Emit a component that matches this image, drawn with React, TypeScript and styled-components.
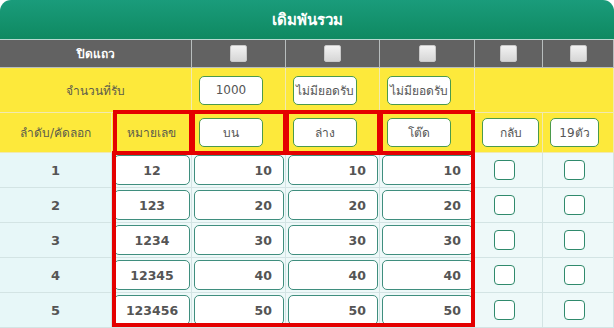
import React from 'react';
import styled, {createGlobalStyle, css} from 'styled-components';

type Tone = 'dark' | 'yellow' | 'data' | 'index';

const GlobalStyle = createGlobalStyle`
  html, body {
    margin: 0;
    padding: 0;
    background: #fff;
  }
  body {
    font-family: Tahoma, "DejaVu Sans", "Noto Sans", sans-serif;
  }
`;

const tones = {
  dark: css`
    background: #626262;
    color: #fff;
    font-weight: bold;
    font-size: 12px;
    border-color: #b8bdbd;
  `,
  yellow: css`
    background: #fde93b;
    color: #5c5c4c;
    font-size: 12px;
    border-color: #f1e9b0;
  `,
  data: css`
    background: #eef9f9;
    border-color: #d3e4e4;
  `,
  index: css`
    background: #e7f7f8;
    color: #555;
    font-weight: bold;
    font-size: 13px;
    border-color: #d3e4e4;
  `,
};

const rows = [
  {no: 1, num: '12', top: 10, bottom: 10, tod: 10},
  {no: 2, num: '123', top: 20, bottom: 20, tod: 20},
  {no: 3, num: '1234', top: 30, bottom: 30, tod: 30},
  {no: 4, num: '12345', top: 40, bottom: 40, tod: 40},
  {no: 5, num: '123456', top: 50, bottom: 50, tod: 50},
];

const App = () => {
  return (
    <>
      <GlobalStyle />
      <Panel>
        <Title>เดิมพันรวม</Title>
        <Grid>
          <Cell $c="1 / 3" $r={1} $tone="dark">ปิดแถว</Cell>
          {[3, 4, 5, 6, 7].map((c) => (
            <Cell key={c} $c={String(c)} $r={1} $tone="dark">
              <Tick />
            </Cell>
          ))}

          <Cell $c="1 / 3" $r={2} $tone="yellow">จำนวนที่รับ</Cell>
          <Cell $c="3" $r={2} $tone="yellow" $start>
            <Chip $w={64}>1000</Chip>
          </Cell>
          <Cell $c="4" $r={2} $tone="yellow" $start>
            <Chip $w={64}>ไม่มียอดรับ</Chip>
          </Cell>
          <Cell $c="5" $r={2} $tone="yellow" $start>
            <Chip $w={64}>ไม่มียอดรับ</Chip>
          </Cell>
          <Cell $c="6 / 8" $r={2} $tone="yellow" />

          <Cell $c="1" $r={3} $tone="yellow">ลำดับ/คัดลอก</Cell>
          <Cell $c="2" $r={3} $tone="yellow">หมายเลข</Cell>
          <Cell $c="3" $r={3} $tone="yellow" $start>
            <Chip $w={64}>บน</Chip>
          </Cell>
          <Cell $c="4" $r={3} $tone="yellow" $start>
            <Chip $w={64}>ล่าง</Chip>
          </Cell>
          <Cell $c="5" $r={3} $tone="yellow" $start>
            <Chip $w={64}>โต๊ด</Chip>
          </Cell>
          <Cell $c="6" $r={3} $tone="yellow" $start>
            <Chip $w={57}>กลับ</Chip>
          </Cell>
          <Cell $c="7" $r={3} $tone="yellow" $start>
            <Chip $w={49}>19ตัว</Chip>
          </Cell>

          {rows.map((row, i) => {
            const r = i + 4;
            return (
              <React.Fragment key={row.no}>
                <Cell $c="1" $r={r} $tone="index">{row.no}</Cell>
                <Cell $c="2" $r={r} $tone="data">
                  <Field $align="center">{row.num}</Field>
                </Cell>
                <Cell $c="3" $r={r} $tone="data">
                  <Field $align="right">{row.top}</Field>
                </Cell>
                <Cell $c="4" $r={r} $tone="data">
                  <Field $align="right">{row.bottom}</Field>
                </Cell>
                <Cell $c="5" $r={r} $tone="data">
                  <Field $align="right">{row.tod}</Field>
                </Cell>
                <Cell $c="6" $r={r} $tone="data" $shift>
                  <Box />
                </Cell>
                <Cell $c="7" $r={r} $tone="data" $shift>
                  <Box />
                </Cell>
              </React.Fragment>
            );
          })}

          <Mark $c="2" $r="3" $m="-3px -1px -2px 1px" />
          <Mark $c="3" $r="3" $m="-3px -1px -2px -1px" />
          <Mark $c="4" $r="3" $m="-3px -1px -2px -1px" />
          <Mark $c="5" $r="3" $m="-3px 0 -2px -1px" />
          <Mark $c="2 / 6" $r="4 / 9" $m="-2px 0 1px 0" />
        </Grid>
      </Panel>
    </>
  );
};

const Panel = styled.div`
  width: 614px;
  overflow: hidden;
`;

const Title = styled.div`
  height: 39px;
  border-bottom: 1px solid #b6d9cf;
  border-radius: 11px 11px 0 0;
  background: linear-gradient(#1a9c7b, #0f8961);
  color: #fff;
  font-size: 15px;
  font-weight: bold;
  display: flex;
  align-items: center;
  justify-content: center;
`;

const Grid = styled.div`
  display: grid;
  grid-template-columns: 112px 80px 94px 94px 95px 68px 71px;
  grid-template-rows: 28px 45px 40px repeat(5, 35px);
`;

const Cell = styled.div<{$c: string; $r: number; $tone: Tone; $start?: boolean; $shift?: boolean}>`
  grid-column: ${({$c}) => $c};
  grid-row: ${({$r}) => $r};
  box-sizing: border-box;
  display: flex;
  align-items: center;
  justify-content: ${({$start}) => ($start ? 'flex-start' : 'center')};
  padding-left: ${({$start}) => ($start ? '7px' : '0')};
  padding-right: ${({$shift}) => ($shift ? '8px' : '0')};
  border-right: 1px solid;
  border-bottom: 1px solid;
  ${({$tone}) => tones[$tone]};
`;

const Tick = styled.div`
  width: 15px;
  height: 15px;
  border: 1px solid #c9c9c9;
  border-radius: 2px;
  background: linear-gradient(#f2f2f2, #d6d6d6);
`;

const Chip = styled.div<{$w: number}>`
  width: ${({$w}) => $w}px;
  height: 29px;
  box-sizing: border-box;
  border: 1px solid #4b9a4b;
  border-radius: 5px;
  background: #fff;
  color: #555;
  font-size: 12px;
  font-weight: normal;
  display: flex;
  align-items: center;
  justify-content: center;
`;

const Field = styled.div<{$align: 'center' | 'right'}>`
  flex: 1;
  align-self: stretch;
  margin: 2px 1px 2px 2px;
  padding: 0 11px;
  box-sizing: border-box;
  border: 1px solid #3f8e7e;
  border-radius: 5px;
  background: #fff;
  color: #555;
  font-size: 12.5px;
  font-weight: bold;
  display: flex;
  align-items: center;
  justify-content: ${({$align}) => ($align === 'right' ? 'flex-end' : 'center')};
`;

const Box = styled.div`
  width: 19px;
  height: 18px;
  border: 1.5px solid #2f8a6c;
  border-radius: 4px;
  background: #fff;
`;

const Mark = styled.div<{$c: string; $r: string; $m: string}>`
  grid-column: ${({$c}) => $c};
  grid-row: ${({$r}) => $r};
  margin: ${({$m}) => $m};
  border: 4px solid #e40000;
  z-index: 2;
  pointer-events: none;
`;

export default App;
